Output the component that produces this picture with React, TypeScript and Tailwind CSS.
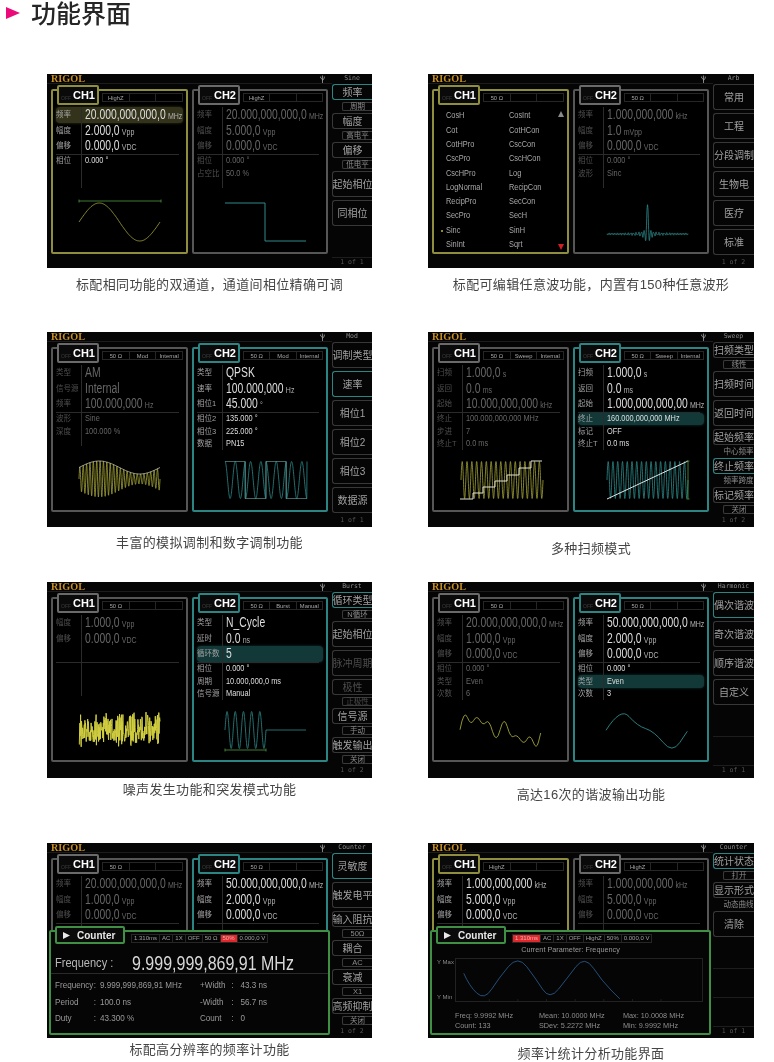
import React from "react";

const YELLOW = "#a3a33a";
const TEAL = "#2f8a8a";

type Row = { label: string; value: string; unit?: string; sel?: boolean };
type Chan = {
	state: "yellow" | "teal" | "off";
	status: string[];
	big?: Row[];
	small?: Row[];
	list?: string[];
	wave?: React.ReactNode;
};
type Key = { label?: string; sub?: string; boxed?: boolean; active?: boolean; dim?: boolean };

const r = (label: string, value: string, unit?: string, sel?: boolean): Row => ({ label, value, unit, sel });

// sample a function into polyline points
const pts = (n: number, x0: number, x1: number, fy: (t: number) => number) =>
	Array.from({ length: n + 1 }, (_, i) => {
		const t = i / n;
		return `${(x0 + (x1 - x0) * t).toFixed(1)},${fy(t).toFixed(1)}`;
	}).join(" ");

// smooth path through points, midpoints as anchors
const smooth = (p: number[][]) => {
	let d = `M${p[0][0]} ${p[0][1]}`;
	for (let i = 1; i < p.length - 1; i++) {
		const mx = (p[i][0] + p[i + 1][0]) / 2;
		const my = (p[i][1] + p[i + 1][1]) / 2;
		d += ` Q${p[i][0]} ${p[i][1]} ${mx.toFixed(1)} ${my.toFixed(1)}`;
	}
	const last = p[p.length - 1];
	return d + ` L${last[0]} ${last[1]}`;
};

const PI2 = Math.PI * 2;

const Line = ({ points, color, w = 0.8 }: { points: string; color: string; w?: number }) => (
	<polyline points={points} fill="none" stroke={color} strokeWidth={w} />
);

const Marker = ({ x0, x1, y }: { x0: number; x1: number; y: number }) => (
	<path d={`M${x0} ${y}H${x1}M${x0} ${y - 1.5}V${y + 1.5}M${x1} ${y - 1.5}V${y + 1.5}`} stroke="#4d9a3c" strokeWidth="0.8" fill="none" />
);

const sineWave = (
	<>
		<Marker x0={25} x1={107} y={13} />
		<Line color={YELLOW} points={pts(80, 25, 106, (t) => 34 - 19 * Math.sin(PI2 * t))} />
	</>
);
const squareWave = <Line color={TEAL} w={1} points="30,15 70,15 70,53 111,53" />;
const sincWave = (
	<Line
		color={TEAL}
		points={pts(700, 31, 112, (t) => {
			const u = (t - 0.5) * 190;
			const s = Math.abs(u) < 0.01 ? 1 : Math.sin(u) / u;
			return 46 - 30 * s + 0.7 * Math.sin(t * 330);
		})}
	/>
);
const amWave = (
	<>
		<Line color={YELLOW} points={pts(600, 25, 106, (t) => 33 - (11.5 + 6.5 * Math.sin(PI2 * t)) * Math.sin(PI2 * 24 * t))} />
		<Line color="#d8d8c8" w={0.7} points={pts(80, 25, 106, (t) => 33 - (11.5 + 6.5 * Math.sin(PI2 * t)))} />
	</>
);
const pskWave = (
	<>
		<Line color={TEAL} points={pts(500, 30, 112, (t) => {
			const s = Math.floor(t * 4) % 2 === 0 ? 1 : -1;
			return 34 - 18.5 * s * Math.cos(PI2 * 8 * t);
		})} />
		<path d="M30 15.5H50M71 15.5H91M50 52.5H71M91 52.5H112M50 15.5V52.5M71 15.5V52.5M91 15.5V52.5" stroke="#6fa9a9" strokeWidth="0.6" fill="none" />
	</>
);
const stairWave = (
	<>
		<Line color={YELLOW} points={pts(600, 26, 108, (t) => 34 - 18.5 * Math.sin(PI2 * 17 * t))} />
		<Line color="#e2e2d8" w={1} points="25,53 38,53 38,47 48,47 48,41 60,41 60,35 72,35 72,29 84,29 84,22 96,22 96,15 107,15" />
	</>
);
const sweepWave = (
	<>
		<Line color={TEAL} points={pts(600, 31, 112, (t) => 34 - 18.5 * Math.sin(PI2 * 17 * t))} />
		<path d="M31 53L112 15" stroke="#e4e4e4" strokeWidth="1" fill="none" />
		<path d="M112 15V53M110.5 15H113.5M110.5 53H113.5" stroke="#4d9a3c" strokeWidth="0.8" fill="none" />
	</>
);
const noiseWave = (
	<Line
		color="#d2cf40"
		w={1}
		points={pts(260, 25, 106, (t) => {
			const h = Math.sin(t * 9127.3) * 43758.5453;
			return 34 - 18 * (2 * (h - Math.floor(h)) - 1) * (0.8 + 0.2 * Math.sin(t * 40));
		})}
	/>
);
const burstWave = (
	<>
		<Marker x0={30} x1={71} y={54} />
		<Line color={TEAL} points={pts(300, 30, 71, (t) => 34 - 18.5 * Math.sin(PI2 * 5 * t))} />
		<Line color={TEAL} points="71,34 111,34" />
	</>
);
const harmonicA = [[118, 473], [130, 410], [150, 462], [168, 428], [187, 462], [205, 440], [227, 518], [250, 428], [270, 500], [288, 486], [310, 520], [328, 484], [347, 536], [360, 483]];
const harmonicB = [[556, 475], [600, 405], [650, 462], [700, 478], [755, 545], [800, 478]];
const harmonic1 = <path d={smooth(harmonicA.map(([x, y]) => [+((x - 37) / 3 - 2).toFixed(1), +((y - 72) / 3 - 100).toFixed(1)]))} fill="none" stroke={YELLOW} strokeWidth="0.9" />;
const harmonic2 = <path d={smooth(harmonicB.map(([x, y]) => [+((x - 460) / 3 - 2).toFixed(1), +((y - 72) / 3 - 100).toFixed(1)]))} fill="none" stroke={TEAL} strokeWidth="0.9" />;

function Status({ cells }: { cells: string[] }) {
	return (
		<div className="flex h-[9px] border border-[#262626]">
			{cells.map((c, i) => (
				<div key={i} className="w-[27px] flex-1 border-r border-[#262626] text-center text-[5.8px] leading-[8px] whitespace-nowrap text-[#a8a8a8] last:border-r-0">
					{c}
				</div>
			))}
		</div>
	);
}

function ValueRow({ row, on, big, tint }: { row: Row; on: boolean; big: boolean; tint: string }) {
	const label = on ? "text-[#a0a0a0]" : "text-[#4f4f4f]";
	const value = on ? "text-[#dedede]" : "text-[#666666]";
	return (
		<div className={`flex items-center ${big ? "h-[15.6px]" : "h-[12.5px]"} ${row.sel ? `rounded-sm ${tint}` : ""}`}>
			<div className={`flex h-full w-[26px] shrink-0 items-center border-r border-[#2b2b2b] text-[7.5px] whitespace-nowrap ${label}`}>{row.label}</div>
			{big ? (
				<div className={`ml-[3px] origin-left scale-x-[0.74] text-[14px] whitespace-nowrap ${value}`}>
					{row.value}
					{row.unit && <span className={`ml-[3px] text-[9.5px] ${on ? "text-[#b0b0b0]" : ""}`}>{row.unit}</span>}
				</div>
			) : (
				<div className={`ml-[3px] origin-left scale-x-[0.82] text-[9px] whitespace-nowrap ${value}`}>{row.value}</div>
			)}
		</div>
	);
}

function ListBody({ items }: { items: string[] }) {
	return (
		<div className="relative mt-[7px] grid h-[143px] grid-cols-[63px_1fr] pl-[11px]">
			{items.map((it) => (
				<div key={it} className="relative flex h-[14.3px] items-center text-[9px] text-[#a8a8a8]">
					{it === "Sinc" && <span className="absolute -left-[5px] h-[2px] w-[2px] rounded-full bg-[#c9b23c]" />}
					<span className="origin-left scale-x-[0.82] whitespace-nowrap">{it}</span>
				</div>
			))}
			<svg className="absolute top-[2px] right-[2px]" width="6" height="6" viewBox="0 0 6 6">
				<path d="M3 0L6 6H0Z" fill="#8a8a8a" />
			</svg>
			<svg className="absolute right-[2px] bottom-[2px]" width="6" height="6" viewBox="0 0 6 6">
				<path d="M3 6L6 0H0Z" fill="#d21f26" />
			</svg>
		</div>
	);
}

function Panel({ name, ch, className }: { name: string; ch: Chan; className: string }) {
	const on = ch.state !== "off";
	const border = ch.state === "yellow" ? "border-[#8e8e3e]" : ch.state === "teal" ? "border-[#2d8583]" : "border-[#565656]";
	const tint = ch.state === "yellow" ? "bg-[#33331b] shadow-[0_0_3px_#33331b]" : "bg-[#123838] shadow-[0_0_3px_#123838]";
	return (
		<div className={`relative h-[165px] rounded-[2px] border-2 bg-black px-[1px] ${border} ${className}`}>
			<div className={`absolute -top-[6px] left-[4px] flex h-[20px] w-[42px] items-end justify-between rounded-[2px] border-2 bg-[#0a0a0a] px-[2px] ${ch.state === "off" ? "border-[#6a6a6a]" : border}`}>
				<span className="pb-[1px] text-[5px] text-[#3d3d3d]">OFF</span>
				<span className="pb-[1px] text-[11px] leading-[14px] font-bold text-white">{name}</span>
			</div>
			<div className="pt-[2px] pr-[2px] pl-[48px]">
				<Status cells={ch.status} />
			</div>
			{ch.list ? (
				<ListBody items={ch.list} />
			) : (
				<>
					<div className="mt-[5px] flex h-[81px] flex-col px-[2px]">
						{(ch.big ?? []).map((row, i) => (
							<ValueRow key={i} row={row} on={on} big tint={tint} />
						))}
						<div className="mr-[4px] h-px shrink-0 bg-[#2b2b2b]" />
						{(ch.small ?? []).map((row, i) => (
							<ValueRow key={i} row={row} on={on} big={false} tint={tint} />
						))}
						<div className="w-[26px] flex-1 border-r border-[#2b2b2b]" />
					</div>
					<svg className="block h-[62px] w-[131px]" viewBox="0 0 131 62">
						{ch.wave}
					</svg>
				</>
			)}
		</div>
	);
}

function SoftKeys({ keys, page }: { keys: Key[]; page: string }) {
	return (
		<div className="ml-[4px] flex min-w-0 flex-1 flex-col overflow-hidden">
			{keys.map((k, i) =>
				k.label ? (
					<div key={i} className="flex h-[29px] shrink-0 flex-col">
						<div
							className={`flex shrink-0 items-center justify-center rounded-l-[3px] border border-r-0 text-[10px] whitespace-nowrap ${k.sub ? "h-[16px]" : "h-[26px]"} ${
								k.active ? "border-[#2d8583]" : "border-[#383838]"
							} ${k.dim ? "text-[#4d4d4d]" : "text-[#a0a0a0]"}`}
						>
							{k.label}
						</div>
						{k.sub && (
							<div className={`mt-[2px] ml-[10px] flex h-[9px] items-center justify-center text-[7.5px] whitespace-nowrap ${k.boxed === false ? "" : "rounded-l-[2px] border border-r-0 border-[#3a3a3a]"} ${k.dim ? "text-[#4d4d4d]" : "text-[#8c8c8c]"}`}>
								{k.sub}
							</div>
						)}
					</div>
				) : (
					<div key={i} className="h-[29px] shrink-0 border-b border-[#1d1d1d]" />
				),
			)}
			<div className="flex h-[10px] items-center justify-center font-['DejaVu_Sans_Mono',monospace] text-[6.5px] text-[#555555]">{page}</div>
		</div>
	);
}

function Screen({ mode, ch1, ch2, keys, page, height, children }: { mode: string; ch1: Chan; ch2: Chan; keys: Key[]; page: string; height: string; children?: React.ReactNode }) {
	return (
		<div className={`relative w-full overflow-hidden bg-[#050505] blur-[0.4px] ${height}`}>
			<div className="flex h-[10px] items-center">
				<div className="flex h-full w-[285px] shrink-0 items-center justify-between border-b border-[#1c1c1c] pr-[7px] pl-[4px]">
					<span className="font-['Liberation_Serif',serif] text-[10.2px] font-bold text-[#c88f22]">RIGOL</span>
					<svg width="5" height="8" viewBox="0 0 5 8" fill="none" stroke="#b8b8b8" strokeWidth="0.7">
						<path d="M2.5 0.5V8M0.7 1.5V3L2.5 4.5M4.3 1.5V3L2.5 5.5" />
					</svg>
				</div>
				<div className="flex-1 text-center font-['DejaVu_Sans_Mono',monospace] text-[6.5px] text-[#8a8a8a]">{mode}</div>
			</div>
			<div className="flex items-start">
				<div className="mt-[5px] ml-[4px] flex shrink-0 gap-[4px]">
					<Panel name="CH1" ch={ch1} className="w-[137px]" />
					<Panel name="CH2" ch={ch2} className="w-[136px]" />
				</div>
				<SoftKeys keys={keys} page={page} />
			</div>
			{children}
		</div>
	);
}

function CounterFrame({ status, children }: { status: string[]; children: React.ReactNode }) {
	return (
		<div className="absolute top-[87px] left-[2px] h-[105px] w-[281px] rounded-[2px] border-2 border-[#3f8f45] bg-[#050505]">
			<div className="absolute -top-[6px] left-[4px] flex h-[18px] w-[70px] items-center gap-[7px] rounded-[2px] border-2 border-[#3f8f45] bg-[#0a0a0a] pl-[6px]">
				<svg width="7" height="7" viewBox="0 0 7 7">
					<path d="M0 0L7 3.5L0 7Z" fill="#e8e8e8" />
				</svg>
				<span className="text-[10px] font-bold text-[#e8e8e8]">Counter</span>
			</div>
			<div className="mt-[2px] flex h-[9px] pl-[80px]">
				{status.map((c, i) => (
					<div
						key={i}
						className={`flex items-center border border-l-0 border-[#262626] px-[2px] text-[6px] whitespace-nowrap first:border-l ${c.includes("red:") ? "bg-[#e0282c] text-[#e6b0b0]" : "text-[#a0a0a0]"}`}
					>
						{c.replace("red:", "")}
					</div>
				))}
			</div>
			{children}
		</div>
	);
}

function Reading({ name, value, nameW, colonW }: { name: string; value: string; nameW: string; colonW: string }) {
	return (
		<div className="flex h-[16.3px] origin-left scale-x-[0.9] items-center text-[9px] whitespace-nowrap text-[#9a9a9a]">
			<span className={nameW}>{name}</span>
			<span className={colonW}>:</span>
			<span>{value}</span>
		</div>
	);
}

function CounterNumbers() {
	return (
		<>
			<div className="mt-[10px] flex h-[21px] items-center border-b border-[#2a2a2a] pl-[4px] text-[#b8b8b8]">
				<span className="w-[77px] shrink-0 origin-left scale-x-[0.92] text-[12px] whitespace-nowrap">Frequency :</span>
				<span className="origin-left scale-x-[0.8] text-[20px] whitespace-nowrap text-[#d8d8d8]">9.999,999,869,91 MHz</span>
			</div>
			<div className="mt-[4px] grid grid-cols-[145px_1fr] pl-[4px]">
				<Reading name="Frequency" value="9.999,999,869,91 MHz" nameW="w-[43px]" colonW="w-[7px]" />
				<Reading name="+Width" value="43.3 ns" nameW="w-[35px]" colonW="w-[10px]" />
				<Reading name="Period" value="100.0 ns" nameW="w-[43px]" colonW="w-[7px]" />
				<Reading name="-Width" value="56.7 ns" nameW="w-[35px]" colonW="w-[10px]" />
				<Reading name="Duty" value="43.300 %" nameW="w-[43px]" colonW="w-[7px]" />
				<Reading name="Count" value="0" nameW="w-[35px]" colonW="w-[10px]" />
			</div>
		</>
	);
}

const chartPoints = [[115, 415], [132, 455], [180, 500], [225, 430], [285, 358], [340, 430], [385, 500], [440, 430], [495, 358], [550, 440], [605, 495]];

function Stat({ text }: { text: string }) {
	return <div className="flex h-[10px] origin-left scale-x-[0.91] items-center text-[8px] whitespace-nowrap text-[#8e8e8e]">{text}</div>;
}

function CounterChart() {
	return (
		<>
			<div className="mt-[1px] h-[12px] scale-x-[0.91] text-center text-[8px] leading-[12px] text-[#9a9a9a]">Current Parameter: Frequency</div>
			<div className="mt-[2px] flex h-[44px]">
				<div className="flex w-[23px] flex-col justify-between pl-[5px] text-[6px] text-[#8a8a8a]">
					<span>Y Max</span>
					<span>Y Min</span>
				</div>
				<svg className="h-[44px] w-[248px] border border-[#222222]" viewBox="0 0 248 44">
					{[30, 60, 90, 120, 150, 180, 210].map((x) => (
						<path key={x} d={`M${x} 44v-2`} stroke="#333333" strokeWidth="0.6" />
					))}
					<path d={smooth(chartPoints.map(([x, y]) => [+((x - 105) / 3).toFixed(1), +((y - 370) / 3).toFixed(1)]))} fill="none" stroke="#2a5a8c" strokeWidth="0.9" />
				</svg>
			</div>
			<div className="mt-[9px] grid grid-cols-[84px_84px_1fr] pl-[23px]">
				<Stat text="Freq: 9.9992 MHz" />
				<Stat text="Mean: 10.0000 MHz" />
				<Stat text="Max: 10.0008 MHz" />
				<Stat text="Count: 133" />
				<Stat text="SDev: 5.2272 MHz" />
				<Stat text="Min: 9.9992 MHz" />
			</div>
		</>
	);
}

function Caption({ text, mt }: { text: string; mt: string }) {
	return <p className={`h-[18px] text-center text-[13px] leading-[18px] tracking-[0.35px] whitespace-nowrap text-[#454545] blur-[0.3px] ${mt}`}>{text}</p>;
}

const arbList = ["CosH", "CosInt", "Cot", "CotHCon", "CotHPro", "CscCon", "CscPro", "CscHCon", "CscHPro", "Log", "LogNormal", "RecipCon", "RecipPro", "SecCon", "SecPro", "SecH", "Sinc", "SinH", "SinInt", "Sqrt"];

const f20 = r("频率", "20.000,000,000,0", "MHz");
const p0 = r("相位", "0.000 °");
const off0 = r("偏移", "0.000,0", "VDC");
const empty: Key = {};

export default function App() {
	return (
		<div className="h-[1062px] w-[774px] overflow-hidden bg-white font-['Liberation_Sans','Noto_Sans_CJK_SC',sans-serif]">
			<div className="flex h-[74px] items-start pl-[6px]">
				<svg className="mt-[7px]" width="14" height="12" viewBox="0 0 14 12">
					<path d="M0 0L14 6L0 12Z" fill="#ec0a7a" />
				</svg>
				<h1 className="ml-[11px] font-['Noto_Sans_CJK_SC',sans-serif] text-[25px] leading-[24px] font-medium text-[#262626] blur-[0.3px]">功能界面</h1>
			</div>
			<div className="grid grid-cols-[325px_326px] grid-rows-[258px_250px_261px_219px] gap-x-[56px] pl-[47px]">
				<div>
					<Screen
						mode="Sine"
						height="h-[194px]"
						page="1 of 1"
						ch1={{ state: "yellow", status: ["HighZ", "", ""], big: [{ ...f20, sel: true }, r("幅度", "2.000,0", "Vpp"), off0], small: [p0], wave: sineWave }}
						ch2={{ state: "off", status: ["HighZ", "", ""], big: [f20, r("幅度", "5.000,0", "Vpp"), off0], small: [p0, r("占空比", "50.0 %")], wave: squareWave }}
						keys={[{ label: "频率", sub: "周期", active: true }, { label: "幅度", sub: "高电平" }, { label: "偏移", sub: "低电平" }, { label: "起始相位" }, { label: "同相位" }, empty]}
					/>
					<Caption text="标配相同功能的双通道，通道间相位精确可调" mt="mt-[8px]" />
				</div>
				<div>
					<Screen
						mode="Arb"
						height="h-[194px]"
						page="1 of 2"
						ch1={{ state: "yellow", status: ["50 Ω", "", ""], list: arbList }}
						ch2={{ state: "off", status: ["50 Ω", "", ""], big: [r("频率", "1.000,000,000", "kHz"), r("幅度", "1.0", "mVpp"), off0], small: [p0, r("波形", "Sinc")], wave: sincWave }}
						keys={[{ label: "常用" }, { label: "工程" }, { label: "分段调制" }, { label: "生物电" }, { label: "医疗" }, { label: "标准" }]}
					/>
					<Caption text="标配可编辑任意波功能，内置有150种任意波形" mt="mt-[8px]" />
				</div>
				<div>
					<Screen
						mode="Mod"
						height="h-[195px]"
						page="1 of 1"
						ch1={{ state: "off", status: ["50 Ω", "Mod", "Internal"], big: [r("类型", "AM"), r("信号源", "Internal"), r("频率", "100.000,000", "Hz")], small: [r("波形", "Sine"), r("深度", "100.000 %")], wave: amWave }}
						ch2={{ state: "teal", status: ["50 Ω", "Mod", "Internal"], big: [r("类型", "QPSK"), r("速率", "100.000,000", "Hz"), r("相位1", "45.000", "°")], small: [r("相位2", "135.000 °"), r("相位3", "225.000 °"), r("数据", "PN15")], wave: pskWave }}
						keys={[{ label: "调制类型" }, { label: "速率", active: true }, { label: "相位1" }, { label: "相位2" }, { label: "相位3" }, { label: "数据源" }]}
					/>
					<Caption text="丰富的模拟调制和数字调制功能" mt="mt-[7px]" />
				</div>
				<div>
					<Screen
						mode="Sweep"
						height="h-[195px]"
						page="1 of 2"
						ch1={{ state: "off", status: ["50 Ω", "Sweep", "Internal"], big: [r("扫频", "1.000,0", "s"), r("返回", "0.0", "ms"), r("起始", "10.000,000,000", "kHz")], small: [r("终止", "100.000,000,000 MHz"), r("步进", "7"), r("终止T", "0.0 ms")], wave: stairWave }}
						ch2={{ state: "teal", status: ["50 Ω", "Sweep", "Internal"], big: [r("扫频", "1.000,0", "s"), r("返回", "0.0", "ms"), r("起始", "1.000,000,000,00", "MHz")], small: [r("终止", "160.000,000,000 MHz", undefined, true), r("标记", "OFF"), r("终止T", "0.0 ms")], wave: sweepWave }}
						keys={[{ label: "扫频类型", sub: "线性" }, { label: "扫频时间" }, { label: "返回时间" }, { label: "起始频率", sub: "中心频率", boxed: false }, { label: "终止频率", sub: "频率跨度", boxed: false, active: true }, { label: "标记频率", sub: "关闭" }]}
					/>
					<Caption text="多种扫频模式" mt="mt-[13px]" />
				</div>
				<div>
					<Screen
						mode="Burst"
						height="h-[196px]"
						page="1 of 2"
						ch1={{ state: "off", status: ["50 Ω", "", ""], big: [r("幅度", "1.000,0", "Vpp"), off0, r("", "")], small: [], wave: noiseWave }}
						ch2={{ state: "teal", status: ["50 Ω", "Burst", "Manual"], big: [r("类型", "N_Cycle"), r("延时", "0.0", "ns"), r("循环数", "5", undefined, true)], small: [p0, r("周期", "10.000,000,0 ms"), r("信号源", "Manual")], wave: burstWave }}
						keys={[{ label: "循环类型", sub: "N循环", active: true }, { label: "起始相位" }, { label: "脉冲周期", dim: true }, { label: "极性", sub: "正极性", dim: true }, { label: "信号源", sub: "手动" }, { label: "触发输出", sub: "关闭" }]}
					/>
					<Caption text="噪声发生功能和突发模式功能" mt="mt-[3px]" />
				</div>
				<div>
					<Screen
						mode="Harmonic"
						height="h-[196px]"
						page="1 of 1"
						ch1={{ state: "off", status: ["50 Ω", "", ""], big: [f20, r("幅度", "1.000,0", "Vpp"), off0], small: [p0, r("类型", "Even"), r("次数", "6")], wave: harmonic1 }}
						ch2={{ state: "teal", status: ["50 Ω", "", ""], big: [r("频率", "50.000,000,000,0", "MHz"), r("幅度", "2.000,0", "Vpp"), off0], small: [p0, r("类型", "Even", undefined, true), r("次数", "3")], wave: harmonic2 }}
						keys={[{ label: "偶次谐波", active: true }, { label: "奇次谐波" }, { label: "顺序谐波" }, { label: "自定义" }, empty, empty]}
					/>
					<Caption text="高达16次的谐波输出功能" mt="mt-[8px]" />
				</div>
				<div>
					<Screen
						mode="Counter"
						height="h-[195px]"
						page="1 of 2"
						ch1={{ state: "off", status: ["50 Ω", "", ""], big: [f20, r("幅度", "1.000,0", "Vpp"), off0], small: [] }}
						ch2={{ state: "teal", status: ["50 Ω", "", ""], big: [r("频率", "50.000,000,000,0", "MHz"), r("幅度", "2.000,0", "Vpp"), off0], small: [] }}
						keys={[{ label: "灵敏度", active: true }, { label: "触发电平" }, { label: "输入阻抗", sub: "50Ω" }, { label: "耦合", sub: "AC" }, { label: "衰减", sub: "X1" }, { label: "高频抑制", sub: "关闭" }]}
					>
						<CounterFrame status={["1.310ms", "AC", "1X", "OFF", "50 Ω", "red:50%", "0.000,0 V"]}>
							<CounterNumbers />
						</CounterFrame>
					</Screen>
					<Caption text="标配高分辨率的频率计功能" mt="mt-[3px]" />
				</div>
				<div>
					<Screen
						mode="Counter"
						height="h-[195px]"
						page="1 of 1"
						ch1={{ state: "yellow", status: ["HighZ", "", ""], big: [r("频率", "1.000,000,000", "kHz"), r("幅度", "5.000,0", "Vpp"), off0], small: [] }}
						ch2={{ state: "off", status: ["HighZ", "", ""], big: [r("频率", "1.000,000,000", "kHz"), r("幅度", "5.000,0", "Vpp"), off0], small: [] }}
						keys={[{ label: "统计状态", sub: "打开", active: true }, { label: "显示形式", sub: "动态曲线", boxed: false }, { label: "清除" }, empty, empty, empty]}
					>
						<CounterFrame status={["red:1.310ms", "AC", "1X", "OFF", "HighZ", "50%", "0.000,0 V"]}>
							<CounterChart />
						</CounterFrame>
					</Screen>
					<Caption text="频率计统计分析功能界面" mt="mt-[7px]" />
				</div>
			</div>
		</div>
	);
}
